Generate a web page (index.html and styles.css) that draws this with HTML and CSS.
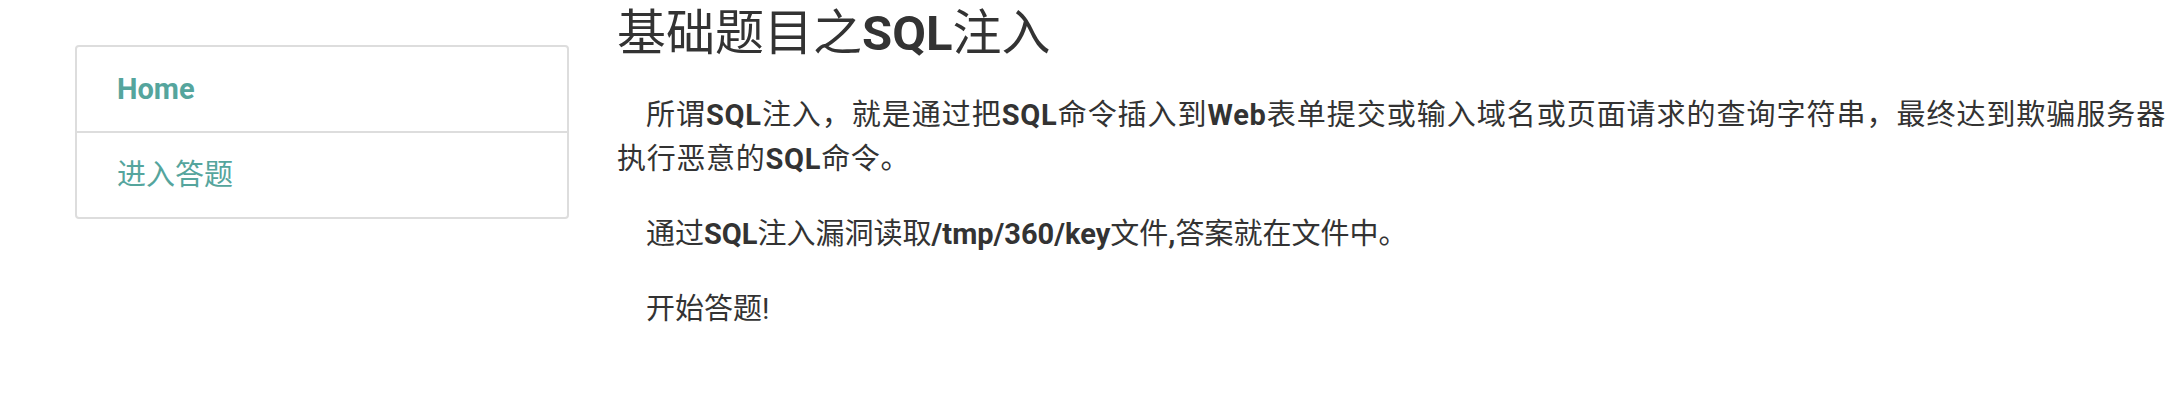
FILE: index.html
```html
<!DOCTYPE html>
<html lang="zh-CN">
<head>
  <meta charset="UTF-8">
  <title>基础题目之SQL注入</title>
  <link rel="stylesheet" href="styles.css">
</head>
<body>
  <div class="page">
    <!-- 左侧导航 -->
    <div class="sidebar">
      <ul class="list-group">
        <li class="list-group-item"><a href="#" class="active">Home</a></li>
        <li class="list-group-item"><a href="#">进入答题</a></li>
      </ul>
    </div>

    <!-- 题目内容 -->
    <div class="main">
      <h3 class="title">基础题目之<b>SQL</b>注入</h3>
      <p class="intro intro-lead">所谓<b>SQL</b>注入，就是通过把<b>SQL</b>命令插入到<b>Web</b>表单提交或输入域名或页面请求的查询字符串，最终达到欺骗服务器执行恶意的<b>SQL</b>命令。</p>
      <p class="intro">通过<b>SQL</b>注入漏洞读取<b>/tmp/360/key</b>文件<b>,</b>答案就在文件中。</p>
      <p class="intro">开始答题!</p>
    </div>
  </div>
</body>
</html>
```

FILE: styles.css
```css
/* 基本样式 */
body {
  margin: 0;
  font-family: Roboto, "Noto Sans CJK SC", sans-serif;
  font-size: 29px;
  line-height: 44px;
  color: #333;
  background-color: #fff;
}

b {
  font-weight: 700;
}

.page {
  display: flex;
  align-items: flex-start;
}

/* 侧边栏 */
.sidebar {
  flex: none;
  width: 494px;
  padding: 45px 0 0 75px;
}

.list-group {
  list-style: none;
  margin: 0;
  padding: 0;
  border: 2px solid #ddd;
  border-radius: 4px;
}

.list-group-item {
  padding: 20px 40px;
}

.list-group-item + .list-group-item {
  border-top: 2px solid #ddd;
}

.list-group-item a {
  color: #55a59d;
  text-decoration: none;
}

.list-group-item a.active {
  font-weight: 700;
}

/* 主体内容 */
.main {
  flex: 1;
  margin-left: 48px;
  padding-right: 4px;
}

.title {
  margin: 0 0 32px;
  padding-top: 7px;
  font-size: 49px;
  line-height: 54px;
  font-weight: 400;
}

.intro {
  margin: 0 0 31px;
  text-indent: 29px;
  text-align: justify;
}

.intro-lead {
  letter-spacing: 0.7px;
}
```
